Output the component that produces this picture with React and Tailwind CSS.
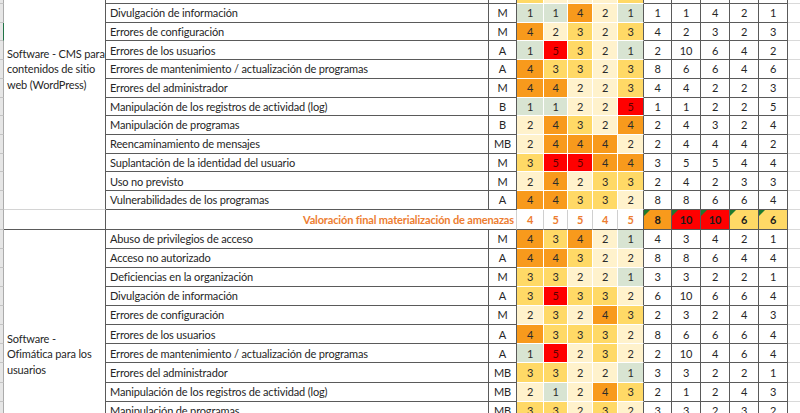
import React from "react";

const FILL = {
  1: "bg-[#d8e4d2] text-[#2b2b2b]",
  2: "bg-[#fff2cc] text-[#2b2b2b]",
  3: "bg-[#ffd966] text-[#2b2b2b]",
  4: "bg-[#f89a1c] text-[#2b2b2b]",
  5: "bg-[#ff0000] text-[#5c0000]",
};
const CW = ["w-[27px]", "w-[24px]", "w-[25px]", "w-[25px]", "w-[26px]"];
const NW = ["w-[28px]", "w-[29px]", "w-[29px]", "w-[29px]", "w-[29px]"];

const group1 = [
  ["Abuso de privilegios de acceso", "M", [3, 3, 2, 2, 1], [3, 3, 2, 2, 1]],
  ["Acceso no autorizado", "A", [4, 3, 3, 2, 2], [8, 6, 6, 4, 4]],
  ["Caída del sistema por agotamiento de recursos", "M", [2, 3, 2, 2, 3], [2, 3, 2, 2, 3]],
  ["Deficiencias en la organización", "M", [3, 2, 2, 2, 3], [3, 2, 2, 2, 3]],
  ["Divulgación de información", "M", [1, 1, 4, 2, 1], [1, 1, 4, 2, 1]],
  ["Errores de configuración", "M", [4, 2, 3, 2, 3], [4, 2, 3, 2, 3]],
  ["Errores de los usuarios", "A", [1, 5, 3, 2, 1], [2, 10, 6, 4, 2]],
  ["Errores de mantenimiento / actualización de programas", "A", [4, 3, 3, 2, 3], [8, 6, 6, 4, 6]],
  ["Errores del administrador", "M", [4, 4, 2, 2, 3], [4, 4, 2, 2, 3]],
  ["Manipulación de los registros de actividad (log)", "B", [1, 1, 2, 2, 5], [1, 1, 2, 2, 5]],
  ["Manipulación de programas", "B", [2, 4, 3, 2, 4], [2, 4, 3, 2, 4]],
  ["Reencaminamiento de mensajes", "MB", [2, 4, 4, 4, 2], [2, 4, 4, 4, 2]],
  ["Suplantación de la identidad del usuario", "M", [3, 5, 5, 4, 4], [3, 5, 5, 4, 4]],
  ["Uso no previsto", "M", [2, 4, 2, 3, 3], [2, 4, 2, 3, 3]],
  ["Vulnerabilidades de los programas", "A", [4, 4, 3, 3, 2], [8, 8, 6, 6, 4]],
];

const group2 = [
  ["Abuso de privilegios de acceso", "M", [4, 3, 4, 2, 1], [4, 3, 4, 2, 1]],
  ["Acceso no autorizado", "A", [4, 4, 3, 2, 2], [8, 8, 6, 4, 4]],
  ["Deficiencias en la organización", "M", [3, 3, 2, 2, 1], [3, 3, 2, 2, 1]],
  ["Divulgación de información", "A", [3, 5, 3, 3, 2], [6, 10, 6, 6, 4]],
  ["Errores de configuración", "M", [2, 3, 2, 4, 3], [2, 3, 2, 4, 3]],
  ["Errores de los usuarios", "A", [4, 3, 3, 3, 2], [8, 6, 6, 6, 4]],
  ["Errores de mantenimiento / actualización de programas", "A", [1, 5, 2, 3, 2], [2, 10, 4, 6, 4]],
  ["Errores del administrador", "MB", [3, 3, 2, 2, 1], [3, 3, 2, 2, 1]],
  ["Manipulación de los registros de actividad (log)", "MB", [2, 1, 2, 4, 3], [2, 1, 2, 4, 3]],
  ["Manipulación de programas", "MB", [3, 3, 2, 3, 2], [3, 3, 2, 3, 2]],
  ["Reencaminamiento de mensajes", "MB", [2, 3, 3, 2, 2], [2, 3, 3, 2, 2]],
  ["Suplantación de la identidad del usuario", "M", [3, 4, 4, 3, 3], [3, 4, 4, 3, 3]],
  ["Uso no previsto", "M", [2, 3, 2, 3, 3], [2, 3, 2, 3, 3]],
];

function Gutter({ rows, h, greenIndex }) {
  return (
    <div className="flex flex-col w-[4px] shrink-0">
      {rows.map((_, i) => (
        <div
          key={i}
          className={`${h} shrink-0 bg-[#e6e6e6] border-b border-b-[#c4c4c4] border-r ${
            i === greenIndex ? "border-r-[#217346]" : "border-r-[#ababab]"
          }`}
        />
      ))}
    </div>
  );
}

function DataRow({ row, h }) {
  const [name, lvl, cols, nums] = row;
  return (
    <div className={`flex ${h} shrink-0`}>
      <div className="w-[383px] shrink-0 flex items-center pl-[4px] pt-[1px] border-r border-b border-[#5a5a5a] whitespace-nowrap overflow-hidden">
        {name}
      </div>
      <div className="w-[28px] shrink-0 flex items-center justify-center pt-[1px] border-r border-b border-[#5a5a5a]">
        {lvl}
      </div>
      {cols.map((v, i) => (
        <div
          key={i}
          className={`${CW[i]} ${FILL[v]} shrink-0 flex items-center justify-center pt-[1px] border-b border-b-white border-r ${
            i === 4 ? "border-r-[#5a5a5a]" : "border-r-white"
          }`}
        >
          {v}
        </div>
      ))}
      {nums.map((v, i) => (
        <div
          key={i}
          className={`${NW[i]} shrink-0 flex items-center justify-center pt-[1px] border-r border-b border-[#5a5a5a]`}
        >
          {v}
        </div>
      ))}
      <div className="w-[12px] shrink-0 border-b border-[#d9d9d9]" />
    </div>
  );
}

function Group({ rows, h, label, greenIndex, catBorder }) {
  return (
    <div className="flex">
      <Gutter rows={rows} h={h} greenIndex={greenIndex} />
      <div
        className={`w-[102px] shrink-0 flex items-center pl-[3px] leading-[15.5px] whitespace-nowrap border-r border-r-[#5a5a5a] ${catBorder}`}
      >
        <div>{label}</div>
      </div>
      <div className="flex flex-col">
        {rows.map((r, i) => (
          <DataRow key={i} row={r} h={h} />
        ))}
      </div>
    </div>
  );
}

function Flag() {
  return (
    <svg className="absolute left-0 top-0" width="6" height="6" viewBox="0 0 6 6">
      <polygon points="0,0 6,0 0,6" fill="#1f7a2e" />
    </svg>
  );
}

function TotalRow() {
  const cols = [4, 5, 5, 4, 5];
  const nums = [
    [8, "bg-[#f89a1c]"],
    [10, "bg-[#ff0000]"],
    [10, "bg-[#ff0000]"],
    [6, "bg-[#ffd966]"],
    [6, "bg-[#ffd966]"],
  ];
  return (
    <div className="flex h-[20px]">
      <div className="w-[4px] shrink-0 bg-[#e6e6e6] border-b border-b-[#c4c4c4] border-r border-r-[#ababab]" />
      <div className="w-[102px] shrink-0 border-r border-b border-[#5a5a5a]" />
      <div className="w-[411px] shrink-0 flex items-center justify-end pr-[2px] pt-[1px] font-bold text-[#ed7d31] border-r border-r-[#d0d0d0] border-b border-b-[#5a5a5a] whitespace-nowrap">
        Valoración final materialización de amenazas
      </div>
      {cols.map((v, i) => (
        <div
          key={i}
          className={`${CW[i]} shrink-0 flex items-center justify-center pt-[1px] font-bold text-[#ed7d31] bg-white border-b border-b-[#5a5a5a] border-r ${
            i === 4 ? "border-r-[#5a5a5a]" : "border-r-[#d0d0d0]"
          }`}
        >
          {v}
        </div>
      ))}
      {nums.map(([v, bg], i) => (
        <div
          key={i}
          className={`${NW[i]} ${bg} relative shrink-0 flex items-center justify-center pt-[1px] font-bold text-[#1a1a1a] border-r border-b border-[#5a5a5a]`}
        >
          <Flag />
          {v}
        </div>
      ))}
      <div className="w-[12px] shrink-0 border-b border-[#d9d9d9]" />
    </div>
  );
}

export default function App() {
  return (
    <div
      className="w-[800px] h-[413px] overflow-hidden bg-white text-[#262626] text-[11px] tracking-[-0.15px]"
      style={{ fontFamily: 'Lato, "Liberation Sans", Arial, sans-serif' }}
    >
      <div className="-mt-[70.9px]">
        <Group
          rows={group1}
          h="h-[18.73px]"
          greenIndex={5}
          catBorder="border-b border-b-[#d4d4d4]"
          label={
            <>
              Software - CMS para
              <br />
              contenidos de sitio
              <br />
              web (WordPress)
            </>
          }
        />
        <TotalRow />
        <Group
          rows={group2}
          h="h-[19.08px]"
          greenIndex={-1}
          catBorder=""
          label={
            <>
              Software -
              <br />
              Ofimática para los
              <br />
              usuarios
            </>
          }
        />
      </div>
    </div>
  );
}
